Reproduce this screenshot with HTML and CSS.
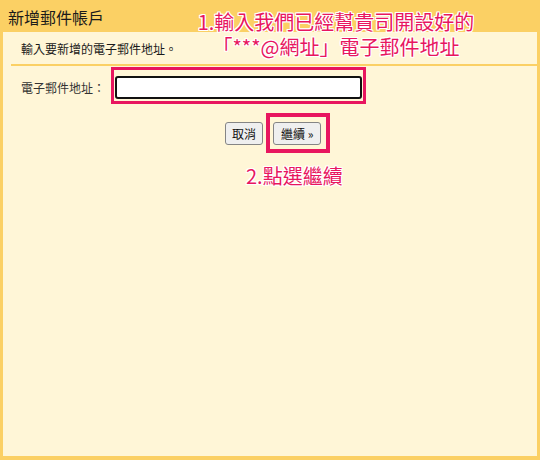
FILE: index.html
```html
<!DOCTYPE html>
<html lang="zh-Hant">
<head>
<meta charset="utf-8">
<link rel="stylesheet" href="styles.css">
</head>
<body>
<div class="window">
  <div class="titlebar">新增郵件帳戶</div>
  <div class="panel">
    <div class="intro">輸入要新增的電子郵件地址。</div>
    <div class="rule"></div>
    <div class="field-row">
      <label class="label" for="email">電子郵件地址：</label>
      <input class="email" id="email" type="text">
    </div>
    <div class="actions">
      <button class="btn" type="button">取消</button>
      <button class="btn btn-next" type="button">繼續 »</button>
    </div>
  </div>
  <div class="hl hl-input"></div>
  <div class="hl hl-next"></div>
  <div class="note note-1">1.輸入我們已經幫貴司開設好的<br>「***@網址」電子郵件地址</div>
  <div class="note note-2">2.點選繼續</div>
</div>
</body>
</html>
```
FILE: styles.css
```css
html, body {
  margin: 0;
  padding: 0;
}
body {
  font-family: "Noto Sans CJK TC", "Noto Sans", sans-serif;
  color: #1c1c1c;
}
.window {
  position: relative;
  width: 540px;
  height: 460px;
  box-sizing: border-box;
  background: #fbd064;
  padding: 0 3px 4px 3px;
  display: flex;
  flex-direction: column;
}
.titlebar {
  height: 32px;
  line-height: 34px;
  font-size: 16px;
  padding-left: 5px;
  color: #1a1a1a;
}
.panel {
  flex: 1;
  background: #fff6d7;
}
.intro {
  height: 32px;
  line-height: 33px;
  padding-left: 18px;
  font-size: 12px;
  color: #1a1a1a;
}
.rule {
  height: 2px;
  margin-left: 8px;
  background: #fbd064;
}
.field-row {
  display: flex;
  align-items: center;
  padding-top: 10px;
}
.label {
  width: 94px;
  padding-left: 18px;
  font-size: 12px;
  line-height: 16px;
  color: #333;
}
.email {
  width: 247px;
  height: 23px;
  box-sizing: border-box;
  border: 2px solid #111;
  border-radius: 3px;
  background: #fff;
  margin: 0;
  padding: 0 4px;
  outline: none;
}
.actions {
  display: flex;
  gap: 10px;
  margin-top: 23px;
  padding-left: 222px;
}
.btn {
  height: 23px;
  margin: 0;
  padding: 0 6px;
  font-family: "Noto Sans CJK TC", "Noto Sans", sans-serif;
  font-size: 12px;
  line-height: 21px;
  color: #111;
  background: #efefef;
  border: 1px solid #858585;
  border-radius: 3px;
}
.btn-next {
  padding: 0 7px;
}
.hl {
  position: absolute;
  box-sizing: border-box;
  border-style: solid;
  border-color: #e8165f;
}
.hl-input {
  left: 111px;
  top: 67px;
  width: 255px;
  height: 37px;
  border-width: 3px;
}
.hl-next {
  left: 266px;
  top: 113px;
  width: 64px;
  height: 40px;
  border-width: 4px;
}
.note {
  position: absolute;
  color: #e8165f;
  font-size: 20px;
  line-height: 25px;
  text-align: center;
  text-shadow: 1px 1px 0 #fff, -1px -1px 0 #fff, 1px -1px 0 #fff, -1px 1px 0 #fff,
    0 1px 0 #fff, 0 -1px 0 #fff, 1px 0 0 #fff, -1px 0 0 #fff;
}
.note-1 {
  left: 186px;
  top: 9px;
  width: 300px;
}
.note-2 {
  left: 246px;
  top: 163px;
}
```
